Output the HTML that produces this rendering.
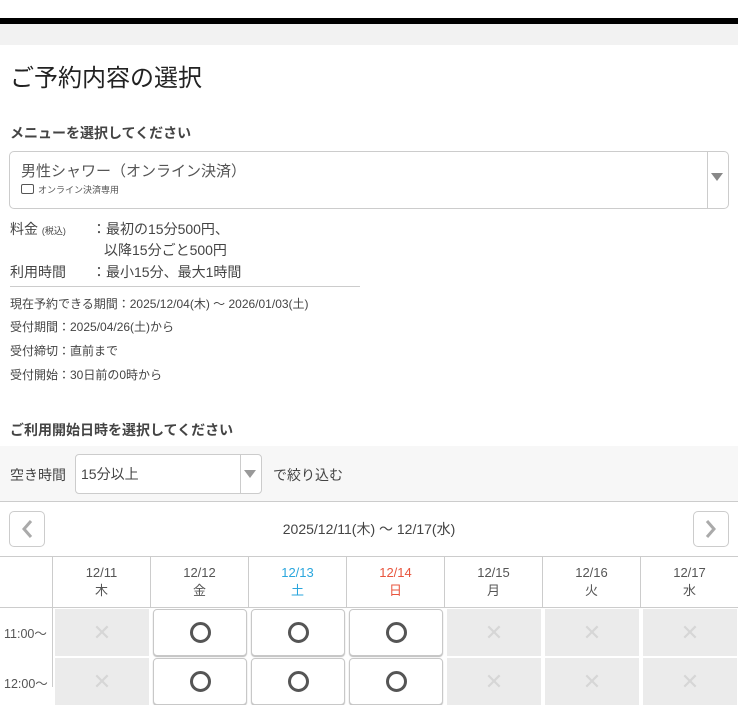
<!DOCTYPE html>
<html><head><meta charset="utf-8"><style>
*{margin:0;padding:0;box-sizing:border-box}
body{width:738px;height:680px;overflow:hidden;background:#fff;font-family:"Liberation Sans","Noto Sans CJK JP",sans-serif;color:#333;position:relative}
.a{position:absolute;white-space:nowrap}
.cell{position:absolute;width:94px;height:47px;display:flex;align-items:center;justify-content:center}
.x{background:#ebebeb;color:#d6d6d6;font-size:22px}
.o{background:#fff;border:1px solid #c8c8c8;border-radius:4px;box-shadow:0 1px 1px #bbb}
.o span{width:21px;height:21px;border:3px solid #555;border-radius:50%}
.hd{position:absolute;top:557px;height:50px;width:98px;text-align:center;font-size:13px;line-height:18px;padding-top:7px;color:#555;border-left:1px solid #ccc}
.sm{font-size:12px;color:#444}
</style></head><body>
<div class="a" style="left:0;top:18px;width:738px;height:6px;background:#000"></div>
<div class="a" style="left:0;top:24px;width:738px;height:21px;background:#f2f2f2"></div>
<div class="a" style="left:10px;top:58px;font-size:24px;color:#222">ご予約内容の選択</div>
<div class="a" style="left:10px;top:123px;font-size:14px;font-weight:bold;color:#444">メニューを選択してください</div>
<div class="a" style="left:9px;top:151px;width:720px;height:58px;border:1px solid #ccc;border-radius:5px"></div>
<div class="a" style="left:707px;top:152px;width:1px;height:56px;background:#ccc"></div>
<div class="a" style="left:711px;top:173px;width:0;height:0;border-left:6px solid transparent;border-right:6px solid transparent;border-top:8px solid #888"></div>
<div class="a" style="left:21px;top:160px;font-size:15px;color:#555">男性シャワー（オンライン決済）</div>
<div class="a" style="left:21px;top:184px;width:13px;height:10px;border:1.5px solid #555;border-radius:2px"></div>
<div class="a" style="left:38px;top:183px;font-size:9px;color:#555">オンライン決済専用</div>
<div class="a" style="left:10px;top:219px;font-size:14px;color:#444">料金 <span style="font-size:9px">(税込)</span></div>
<div class="a" style="left:92px;top:219px;font-size:14px;color:#444">：最初の15分500円、</div>
<div class="a" style="left:104px;top:240px;font-size:14px;color:#444">以降15分ごと500円</div>
<div class="a" style="left:10px;top:262px;font-size:14px;color:#444">利用時間</div>
<div class="a" style="left:92px;top:262px;font-size:14px;color:#444">：最小15分、最大1時間</div>
<div class="a" style="left:10px;top:286px;width:350px;height:1px;background:#ccc"></div>
<div class="a sm" style="left:10px;top:295px">現在予約できる期間：2025/12/04(木) ～ 2026/01/03(土)</div>
<div class="a sm" style="left:10px;top:318px">受付期間：2025/04/26(土)から</div>
<div class="a sm" style="left:10px;top:342px">受付締切：直前まで</div>
<div class="a sm" style="left:10px;top:366px">受付開始：30日前の0時から</div>
<div class="a" style="left:10px;top:420px;font-size:14px;font-weight:bold;color:#444">ご利用開始日時を選択してください</div>
<div class="a" style="left:0;top:446px;width:738px;height:56px;background:#f7f7f7;border-bottom:1px solid #ccc"></div>
<div class="a" style="left:10px;top:465px;font-size:14px;color:#444">空き時間</div>
<div class="a" style="left:75px;top:454px;width:187px;height:40px;border:1px solid #ccc;border-radius:4px;background:#fff"></div>
<div class="a" style="left:240px;top:455px;width:1px;height:38px;background:#ccc"></div>
<div class="a" style="left:244px;top:470px;width:0;height:0;border-left:6px solid transparent;border-right:6px solid transparent;border-top:8px solid #999"></div>
<div class="a" style="left:81px;top:464px;font-size:14px;color:#444">15分以上</div>
<div class="a" style="left:273px;top:465px;font-size:14px;color:#444">で絞り込む</div>
<div class="a" style="left:9px;top:511px;width:36px;height:36px;border:1px solid #ccc;border-radius:5px"><svg width="34" height="34" style="display:block"><path d="M21 9 L14 17 L21 25" fill="none" stroke="#aaa" stroke-width="3"/></svg></div>
<div class="a" style="left:693px;top:511px;width:36px;height:36px;border:1px solid #ccc;border-radius:5px"><svg width="34" height="34" style="display:block"><path d="M13 9 L20 17 L13 25" fill="none" stroke="#aaa" stroke-width="3"/></svg></div>
<div class="a" style="left:0;top:519px;width:738px;text-align:center;font-size:14px;color:#444">2025/12/11(木) ～ 12/17(水)</div>
<div class="a" style="left:0;top:556px;width:738px;height:1px;background:#ccc"></div>
<div class="a" style="left:0;top:607px;width:738px;height:1px;background:#ccc"></div>
<div class="hd" style="left:52px">12/11<br>木</div>
<div class="hd" style="left:150px">12/12<br>金</div>
<div class="hd" style="left:248px;color:#2aa6dd">12/13<br>土</div>
<div class="hd" style="left:346px;color:#e8553e">12/14<br>日</div>
<div class="hd" style="left:444px">12/15<br>月</div>
<div class="hd" style="left:542px">12/16<br>火</div>
<div class="hd" style="left:640px">12/17<br>水</div>
<div class="a" style="left:4px;top:623px;font-size:12.5px;color:#555">11:00～</div>
<div class="a" style="left:4px;top:673px;font-size:12.5px;color:#555">12:00～</div>
<div class="a" style="left:52px;top:607px;width:1px;height:80px;background:#ccc"></div>
<div class="cell x" style="left:55px;top:609px">✕</div>
<div class="cell o" style="left:153px;top:609px"><span></span></div>
<div class="cell o" style="left:251px;top:609px"><span></span></div>
<div class="cell o" style="left:349px;top:609px"><span></span></div>
<div class="cell x" style="left:447px;top:609px">✕</div>
<div class="cell x" style="left:545px;top:609px">✕</div>
<div class="cell x" style="left:643px;top:609px">✕</div>
<div class="cell x" style="left:55px;top:658px">✕</div>
<div class="cell o" style="left:153px;top:658px"><span></span></div>
<div class="cell o" style="left:251px;top:658px"><span></span></div>
<div class="cell o" style="left:349px;top:658px"><span></span></div>
<div class="cell x" style="left:447px;top:658px">✕</div>
<div class="cell x" style="left:545px;top:658px">✕</div>
<div class="cell x" style="left:643px;top:658px">✕</div>
</body></html>
